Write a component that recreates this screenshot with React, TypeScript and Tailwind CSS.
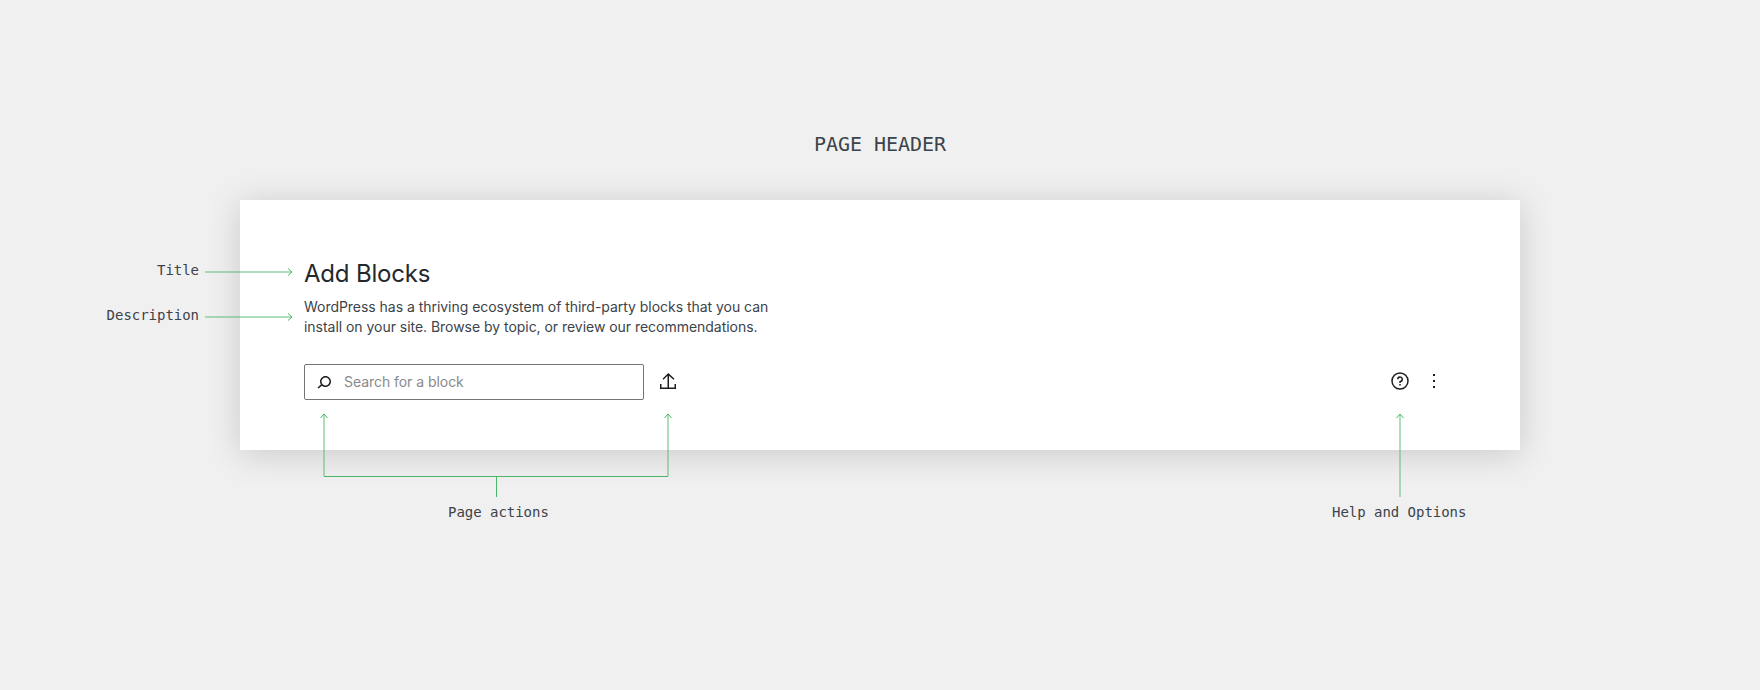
const monoFont = "font-['DejaVu_Sans_Mono',monospace]";

const IconSearch = () => (
	<svg viewBox="0 0 24 24" className="w-6 h-6 fill-[#1e1e1e]">
		<path d="M13.5 6C10.5 6 8 8.5 8 11.5c0 1.1.3 2.1.9 3l-3.4 3 1 1.1 3.4-2.9c1 .9 2.2 1.4 3.6 1.4 3 0 5.5-2.5 5.5-5.5C19 8.5 16.5 6 13.5 6zm0 9.5c-2.2 0-4-1.8-4-4s1.8-4 4-4 4 1.8 4 4-1.8 4-4 4z" />
	</svg>
);

const IconUpload = () => (
	<svg viewBox="0 0 24 24" className="w-6 h-6 fill-[#1e1e1e]">
		<path d="M18.5 15v3.5H13V6.7l4.5 4.1 1-1.1-6.2-5.8-5.8 5.8 1 1.1 4-4v11.7h-6V15H4v5h16v-5z" />
	</svg>
);

const IconHelp = () => (
	<svg viewBox="0 0 24 24" className="w-6 h-6 fill-[#1e1e1e]">
		<path d="M12 4.75a7.25 7.25 0 100 14.5 7.25 7.25 0 000-14.5zM3.25 12a8.75 8.75 0 1117.5 0 8.75 8.75 0 01-17.5 0zM12 8.75a1.5 1.5 0 01.167 2.99c-.465.052-.917.44-.917 1.01V14h1.5v-.845A3 3 0 109 10.25h1.5a1.5 1.5 0 011.5-1.5zM11.25 15v1.5h1.5V15h-1.5z" />
	</svg>
);

const IconMore = () => (
	<svg viewBox="0 0 24 24" className="w-6 h-6 fill-[#1e1e1e]">
		<path d="M13 19h-2v-2h2v2zm0-6h-2v-2h2v2zm0-6h-2V5h2v2z" />
	</svg>
);

const Annotations = () => (
	<svg viewBox="0 0 1760 690" className="absolute inset-0 w-[1760px] h-[690px] pointer-events-none fill-none">
		<g stroke="#4ab866" strokeOpacity="0.6" strokeWidth="1.5">
			<path d="M205 272H292" />
			<path d="M205 317H292" />
			<path d="M324 476V414" />
			<path d="M668 476V414" />
			<path d="M1400 497V414" />
		</g>
		<g stroke="#4ab866" strokeWidth="1">
			<path d="M288 268.500L292 272L288 275.500" />
			<path d="M288 313.500L292 317L288 320.500" />
			<path d="M320.500 418L324 414L327.500 418" />
			<path d="M664.500 418L668 414L671.500 418" />
			<path d="M1396.500 418L1400 414L1403.500 418" />
			<path d="M324 476.500H668M496.500 476.500V497" />
		</g>
	</svg>
);

const Label = ({ className, text }: { className: string; text: string }) => (
	<span className={`absolute ${monoFont} text-sm leading-5 tracking-[-0.03px] text-[#3c434a] ${className}`}>{text}</span>
);

export default function App() {
	return (
		<div className="relative h-[690px] w-[1760px] overflow-hidden bg-[#f0f0f0] pt-[131px]">
			<h1 className={`${monoFont} text-center text-xl leading-[26px] font-normal tracking-[-0.05px] text-[#3c434a]`}>PAGE HEADER</h1>
			<main className="mx-auto mt-[43px] flex h-[250px] w-[1280px] flex-col bg-white px-16 pt-[58px] font-['Inter',sans-serif] shadow-[0_4px_32px_rgba(0,0,0,0.16)]">
				<h2 className="text-2xl leading-8 font-normal tracking-[-0.2px] text-[#23282d]">Add Blocks</h2>
				<p className="mt-[7px] w-[480px] text-sm leading-5 tracking-[-0.035px] text-[#3c434a]">
					WordPress has a thriving ecosystem of third-party blocks that you can install on your site. Browse by topic, or review our recommendations.
				</p>
				<div className="mt-[27px] flex items-center">
					<div className="flex h-9 w-[340px] items-center gap-2 rounded-[2px] border border-[#757575] pl-[7px]">
						<IconSearch />
						<span className="text-sm tracking-[-0.05px] text-[#8a8a8a]">Search for a block</span>
					</div>
					<button className="-mt-[2px] ml-[6px] flex h-9 w-9 items-center justify-center">
						<IconUpload />
					</button>
					<div className="-mt-[2px] ml-auto mr-[10px] flex items-center gap-[10px]">
						<IconHelp />
						<IconMore />
					</div>
				</div>
			</main>
			<Annotations />
			<Label className="right-[1561px] top-[260px]" text="Title" />
			<Label className="right-[1561px] top-[305px]" text="Description" />
			<Label className="left-[448px] top-[502px]" text="Page actions" />
			<Label className="left-[1332px] top-[502px]" text="Help and Options" />
		</div>
	);
}
